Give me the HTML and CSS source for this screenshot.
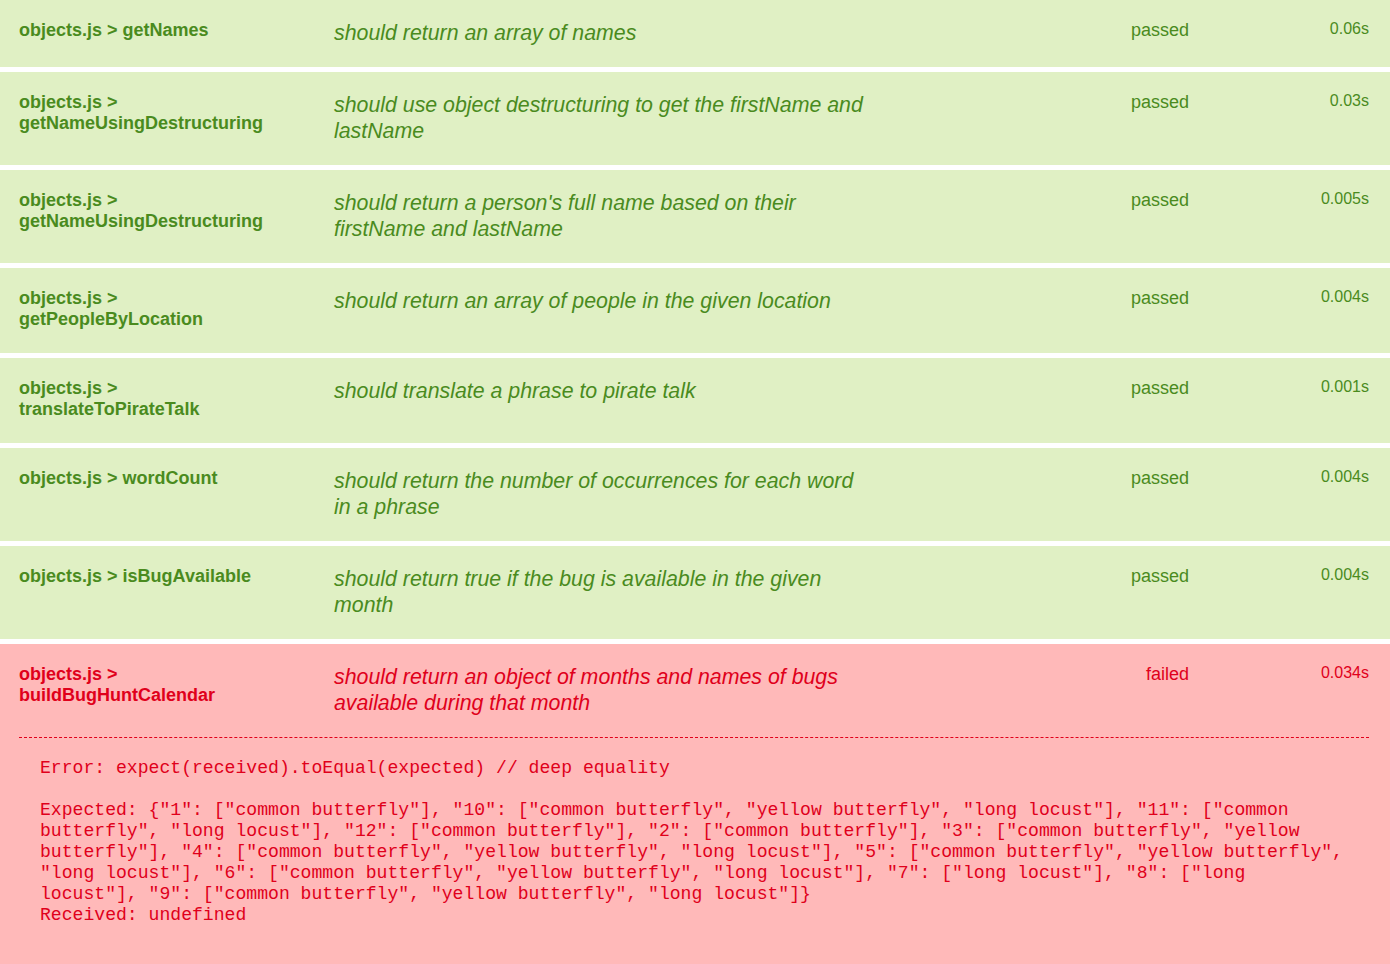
FILE: index.html
```html
<!DOCTYPE html>
<html lang="en">
<head>
<meta charset="utf-8">
<title>Test results</title>
<link rel="stylesheet" href="styles.css">
</head>
<body>
<div class="results">
  <div class="test passed">
    <div class="row">
      <div class="name">objects.js &gt; getNames</div>
      <div class="desc">should return an array of names</div>
      <div class="status">passed</div>
      <div class="time">0.06s</div>
    </div>
  </div>
  <div class="test passed">
    <div class="row">
      <div class="name">objects.js &gt; getNameUsingDestructuring</div>
      <div class="desc">should use object destructuring to get the firstName and lastName</div>
      <div class="status">passed</div>
      <div class="time">0.03s</div>
    </div>
  </div>
  <div class="test passed">
    <div class="row">
      <div class="name">objects.js &gt; getNameUsingDestructuring</div>
      <div class="desc">should return a person's full name based on their firstName and lastName</div>
      <div class="status">passed</div>
      <div class="time">0.005s</div>
    </div>
  </div>
  <div class="test passed">
    <div class="row">
      <div class="name">objects.js &gt; getPeopleByLocation</div>
      <div class="desc">should return an array of people in the given location</div>
      <div class="status">passed</div>
      <div class="time">0.004s</div>
    </div>
  </div>
  <div class="test passed">
    <div class="row">
      <div class="name">objects.js &gt; translateToPirateTalk</div>
      <div class="desc">should translate a phrase to pirate talk</div>
      <div class="status">passed</div>
      <div class="time">0.001s</div>
    </div>
  </div>
  <div class="test passed">
    <div class="row">
      <div class="name">objects.js &gt; wordCount</div>
      <div class="desc">should return the number of occurrences for each word in a phrase</div>
      <div class="status">passed</div>
      <div class="time">0.004s</div>
    </div>
  </div>
  <div class="test passed">
    <div class="row">
      <div class="name">objects.js &gt; isBugAvailable</div>
      <div class="desc">should return true if the bug is available in the given month</div>
      <div class="status">passed</div>
      <div class="time">0.004s</div>
    </div>
  </div>
  <div class="test failed">
    <div class="row">
      <div class="name">objects.js &gt; buildBugHuntCalendar</div>
      <div class="desc">should return an object of months and names of bugs available during that month</div>
      <div class="status">failed</div>
      <div class="time">0.034s</div>
    </div>
    <div class="error">
<pre class="error-text">Error: expect(received).toEqual(expected) // deep equality

Expected: {"1": ["common butterfly"], "10": ["common butterfly", "yellow butterfly", "long locust"], "11": ["common butterfly", "long locust"], "12": ["common butterfly"], "2": ["common butterfly"], "3": ["common butterfly", "yellow butterfly"], "4": ["common butterfly", "yellow butterfly", "long locust"], "5": ["common butterfly", "yellow butterfly", "long locust"], "6": ["common butterfly", "yellow butterfly", "long locust"], "7": ["long locust"], "8": ["long locust"], "9": ["common butterfly", "yellow butterfly", "long locust"]}
Received: undefined</pre>
    </div>
  </div>
</div>
</body>
</html>
```

FILE: styles.css
```css
html, body {
  margin: 0;
  padding: 0;
  background: #ffffff;
}

body {
  font-family: "Liberation Sans", Arial, sans-serif;
}

.results {
  display: flex;
  flex-direction: column;
  gap: 5px;
}

.test {
  padding: 0 21px 0 19px;
}

.test.passed {
  background: #e0f0c4;
  color: #4a8b1e;
}

.test.failed {
  background: #ffb9b9;
  color: #e0001b;
  padding-bottom: 40px;
}

.row {
  display: grid;
  grid-template-columns: 265px 540px 265px 1fr;
  column-gap: 50px;
  align-items: start;
  padding: 20px 0 21px;
}

.name {
  font-weight: bold;
  font-size: 18px;
  line-height: 21px;
  padding-bottom: 2px;
}

.desc {
  font-style: italic;
  font-size: 21.33px;
  line-height: 26px;
}

.status {
  font-size: 18px;
  line-height: 21px;
  text-align: right;
}

.time {
  font-size: 16px;
  line-height: 18px;
  text-align: right;
}

.error {
  border-top: 1px dashed #e0001b;
  padding: 20px 21px 0 21px;
}

.error-text {
  margin: 0;
  font-family: "Liberation Mono", "Courier New", monospace;
  font-size: 18.1px;
  line-height: 21px;
  white-space: pre-wrap;
  word-wrap: break-word;
}
```
